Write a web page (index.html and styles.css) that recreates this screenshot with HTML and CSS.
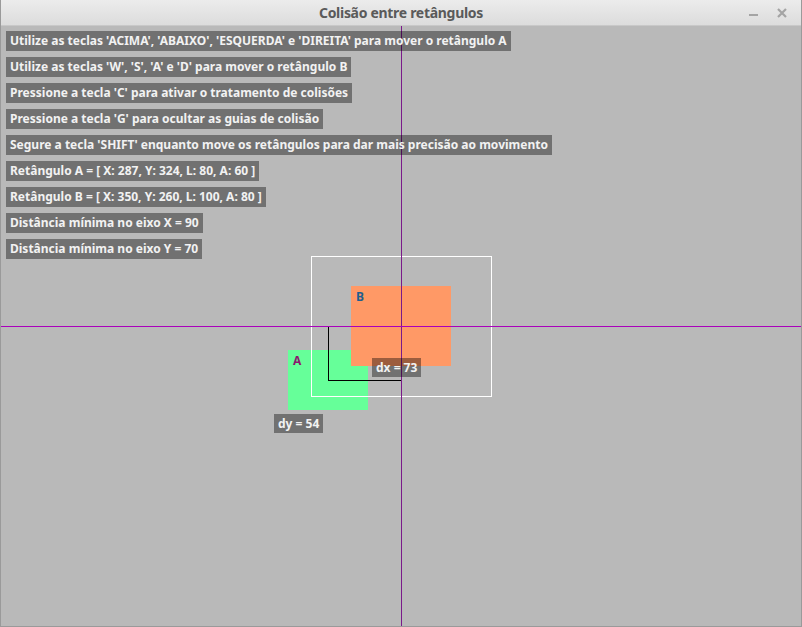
FILE: index.html
```html
<!DOCTYPE html>
<html>
<head>
<meta charset="utf-8">
<link rel="stylesheet" href="styles.css">
</head>
<body>
<div class="window">
  <div class="titlebar">
    <span class="title">Colisão entre retângulos</span>
    <div class="controls">
      <span class="ctl min"></span>
      <svg class="ctl close" width="10" height="10" viewBox="0 0 10 10"><path d="M1 1 L9 9 M9 1 L1 9" stroke="#a4a4a4" stroke-width="2.2"/></svg>
    </div>
  </div>
  <div class="canvas">
    <div class="rect rect-a"><span class="tag tag-a">A</span></div>
    <div class="rect rect-b"><span class="tag tag-b">B</span></div>
    <div class="minkowski"></div>
    <div class="guide guide-v"></div>
    <div class="guide guide-h"></div>
    <div class="axis axis-v"></div>
    <div class="axis axis-h"></div>
    <div class="info">
      <span class="label">Utilize as teclas 'ACIMA', 'ABAIXO', 'ESQUERDA' e 'DIREITA' para mover o retângulo A</span>
      <span class="label">Utilize as teclas 'W', 'S', 'A' e 'D' para mover o retângulo B</span>
      <span class="label">Pressione a tecla 'C' para ativar o tratamento de colisões</span>
      <span class="label">Pressione a tecla 'G' para ocultar as guias de colisão</span>
      <span class="label">Segure a tecla 'SHIFT' enquanto move os retângulos para dar mais precisão ao movimento</span>
      <span class="label">Retângulo A = [ X: 287, Y: 324, L: 80, A: 60 ]</span>
      <span class="label">Retângulo B = [ X: 350, Y: 260, L: 100, A: 80 ]</span>
      <span class="label">Distância mínima no eixo X = 90</span>
      <span class="label">Distância mínima no eixo Y = 70</span>
    </div>
    <span class="label dist dist-x">dx = 73</span>
    <span class="label dist dist-y">dy = 54</span>
  </div>
</div>
</body>
</html>
```
FILE: styles.css
```css
* { box-sizing: border-box; }
html, body { margin: 0; padding: 0; background: #b9b9b9; }
.window {
  width: 802px;
  height: 627px;
  border: 1px solid #9a9a9a;
  border-top: none;
  background: #b9b9b9;
  overflow: hidden;
}
.titlebar {
  height: 26px;
  background: linear-gradient(#ececec, #dcdcdc);
  border-bottom: 1px solid #c8c8c8;
  position: relative;
  display: flex;
  align-items: center;
  justify-content: center;
  font-family: "Noto Sans", sans-serif;
}
.title {
  font-size: 14px;
  font-weight: bold;
  color: #5a5a5a;
  letter-spacing: -0.3px;
}
.controls {
  position: absolute;
  right: 14px;
  top: 0;
  height: 26px;
  display: flex;
  align-items: center;
  gap: 19px;
}
.min {
  display: block;
  width: 9px;
  height: 2px;
  margin-top: 3px;
  background: #a4a4a4;
}
.close { display: block; }
.canvas {
  position: relative;
  width: 800px;
  height: 600px;
  background: #b9b9b9;
  font-family: "Noto Sans", sans-serif;
}
.info {
  position: relative;
  z-index: 3;
  display: flex;
  flex-direction: column;
  align-items: flex-start;
  gap: 6px;
  padding: 5px;
}
.label {
  display: block;
  height: 20px;
  line-height: 20px;
  padding: 0 4px;
  background: rgba(0, 0, 0, 0.39);
  color: #f2f2f2;
  font-size: 12px;
  font-weight: bold;
  white-space: nowrap;
}
.rect { position: absolute; }
.rect-a { left: 287px; top: 324px; width: 80px; height: 60px; background: #66ff99; }
.rect-b { left: 350px; top: 260px; width: 100px; height: 80px; background: #ff9966; }
.tag {
  position: absolute;
  left: 5px;
  top: 2px;
  font-size: 12px;
  font-weight: bold;
}
.tag-a { color: #8b1a6e; }
.tag-b { color: #1f5f8f; }
.minkowski {
  position: absolute;
  left: 310px;
  top: 230px;
  width: 181px;
  height: 141px;
  border: 1px solid #ffffff;
  z-index: 1;
}
.guide { position: absolute; background: #000; z-index: 1; }
.guide-v { left: 327px; top: 300px; width: 1px; height: 55px; }
.guide-h { left: 327px; top: 354px; width: 74px; height: 1px; }
.axis { position: absolute; z-index: 2; }
.axis-v { left: 400px; top: 0; width: 1px; height: 600px; background: #7a1a8a; }
.axis-h { left: 0; top: 300px; width: 800px; height: 1px; background: #aa00bb; }
.dist { position: absolute; z-index: 4; height: 19px; line-height: 19px; }
.dist-x { left: 371px; top: 332px; }
.dist-y { left: 273px; top: 388px; }
```
